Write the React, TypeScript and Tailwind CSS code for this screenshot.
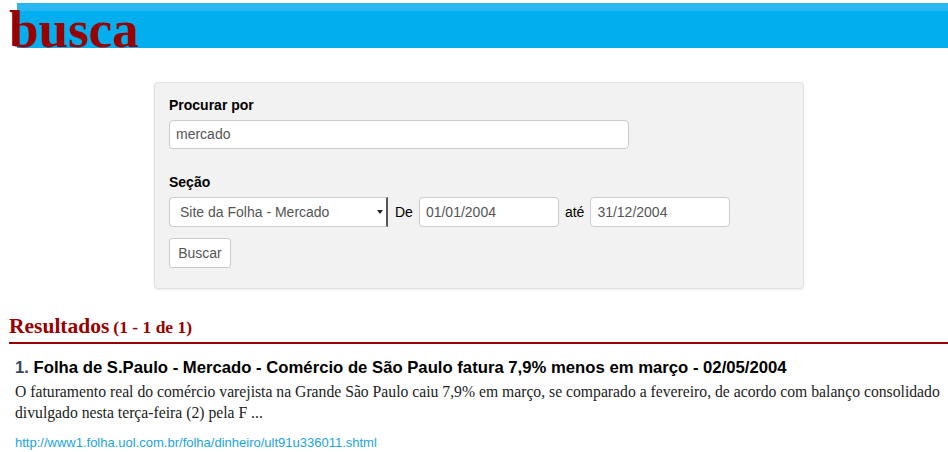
import React from 'react';

const sans = { fontFamily: '"Liberation Sans", Arial, sans-serif' };

export default function App() {
  return (
    <div className="min-h-screen bg-white text-[#222]" style={sans}>
      {/* header bar */}
      <div className="ml-[17px] mt-[3px] border-t-8 border-[#2ab7f1] bg-[#03aeef]">
        <h1 className="-ml-[8px] font-['Liberation_Serif',serif] text-[53px] font-bold leading-[37px] text-[#990000]">
          busca
        </h1>
      </div>

      {/* search form */}
      <div className="ml-[154px] mt-[34px] w-[650px] rounded-[4px] border border-[#e0e0e0] bg-[#f2f2f2] px-[14px] pb-[20px] pt-[12px] shadow-[0_1px_2px_rgba(0,0,0,0.08)]">
        <label className="block text-[14px] font-bold leading-[20px] text-black">Procurar por</label>
        <div className="mt-[5px] flex h-[29px] w-[460px] items-center rounded-[4px] border border-[#cccccc] bg-white px-[6px] text-[14px] text-[#555]">
          mercado
        </div>

        <label className="mt-[23px] block text-[14px] font-bold leading-[20px] text-black">Seção</label>
        <div className="mt-[5px] flex items-center text-[14px] text-black">
          <div className="flex h-[30px] w-[219px] items-center justify-between rounded-l-[4px] border border-[#cccccc] border-r-2 border-r-[#555] bg-white pl-[10px] pr-[3px] text-[14px] text-[#555]">
            <span>Site da Folha - Mercado</span>
            <svg width="6" height="4" viewBox="0 0 6 4"><path d="M0 0h6L3 4z" fill="#222" /></svg>
          </div>
          <span className="ml-[7px]">De</span>
          <div className="ml-[6px] flex h-[30px] w-[140px] items-center rounded-[4px] border border-[#cccccc] bg-white px-[6px] text-[#555]">
            01/01/2004
          </div>
          <span className="ml-[6px]">até</span>
          <div className="ml-[6px] flex h-[30px] w-[140px] items-center rounded-[4px] border border-[#cccccc] bg-white px-[6px] text-[#555]">
            31/12/2004
          </div>
        </div>
        <button className="mt-[11px] flex h-[30px] w-[62px] items-center justify-center rounded-[3px] border border-[#cccccc] bg-white text-[14px] text-[#555]">
          Buscar
        </button>
      </div>

      {/* results */}
      <div className="mt-[25px] pl-[9px]">
        <h2 className="border-b-2 border-[#990000] pb-[2px] font-['Liberation_Serif',serif] font-bold leading-[24px] text-[#990000]">
          <span className="text-[21.5px]">Resultados</span>{' '}
          <span className="text-[17.5px]">(1 - 1 de 1)</span>
        </h2>
        <div className="pl-[6px] pt-[14px]">
          <h3 className="text-[16.7px] font-bold leading-[20px] text-black">
            <span className="text-[#34495e]">1.</span> Folha de S.Paulo - Mercado - Comércio de São Paulo fatura 7,9% menos em março - 02/05/2004
          </h3>
          <p className="mt-[3px] font-['Liberation_Serif',serif] text-[15.7px] leading-[21px] text-[#222]">
            O faturamento real do comércio varejista na Grande São Paulo caiu 7,9% em março, se comparado a fevereiro, de acordo com balanço consolidado divulgado nesta terça-feira (2) pela F ...
          </p>
          <a className="mt-[12px] block text-[13px] leading-[16px] text-[#1aa3e6]" href="#">
            http://www1.folha.uol.com.br/folha/dinheiro/ult91u336011.shtml
          </a>
        </div>
      </div>
    </div>
  );
}
